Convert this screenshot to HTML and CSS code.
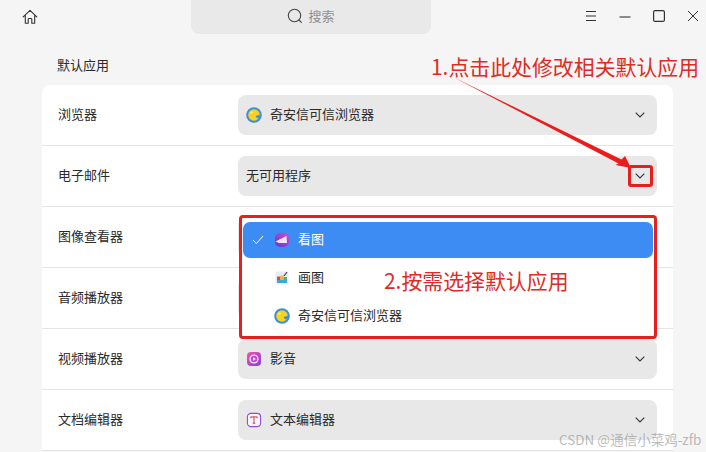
FILE: index.html
```html
<!DOCTYPE html>
<html lang="zh">
<head>
<meta charset="utf-8">
<title>默认应用</title>
<link rel="stylesheet" href="styles.css">
</head>
<body>
<div class="app">
  <header class="titlebar">
    <svg class="home-icon" width="16" height="16" viewBox="0 0 16 16"><path d="M1.2 7.800 8 1.400l6.800 6.400M3.300 6.600v7.600h2.900v-3.900c0-.5.3-.8.8-.8h2c.5 0 .8.300.8.800v3.900h2.900V6.600" fill="none" stroke="#333" stroke-width="1.100" stroke-linejoin="round" stroke-linecap="round"/></svg>
    <div class="search">
      <svg width="16" height="16" viewBox="0 0 16 16"><circle cx="7.500" cy="7.500" r="6.200" fill="none" stroke="#444" stroke-width="1.100"/><path d="m12 12 2.400 2.400" stroke="#444" stroke-width="1.100" stroke-linecap="round"/></svg>
      <span>搜索</span>
    </div>
    <div class="win-controls">
      <svg width="12" height="12" viewBox="0 0 12 12"><path d="M1 1.500h10M1 6h10M1 10.500h10" stroke="#333" stroke-width="1.100"/></svg>
      <svg width="12" height="12" viewBox="0 0 12 12"><path d="M.5 7h11" stroke="#333" stroke-width="1.100"/></svg>
      <svg width="12" height="12" viewBox="0 0 12 12"><rect x=".6" y=".6" width="10.800" height="10.800" rx="1.500" fill="none" stroke="#333" stroke-width="1.200"/></svg>
      <svg width="12" height="12" viewBox="0 0 12 12"><path d="m1 1 10 10M11 1 1 11" stroke="#333" stroke-width="1"/></svg>
    </div>
  </header>

  <main class="content">
    <h1 class="heading">默认应用</h1>
    <section class="card">
      <div class="row">
        <span class="label">浏览器</span>
        <div class="select">
          <svg class="app-icon" width="16" height="16" viewBox="0 0 16 16"><circle cx="8" cy="8" r="7.800" fill="#3b8fdc"/><circle cx="8" cy="8" r="5.800" fill="#f7d21e"/><path d="M9.500 9 13.800 7.800v2.400l-2.400 1.300z" fill="#3b8fdc"/><circle cx="5.600" cy="5.600" r="1.200" fill="#fdeb85"/></svg>
          <span class="value">奇安信可信浏览器</span>
          <svg class="chevron" width="10" height="6" viewBox="0 0 10 6"><path d="m.7.7 4.300 4.300L9.300.7" fill="none" stroke="#333" stroke-width="1.100"/></svg>
        </div>
      </div>
      <div class="row">
        <span class="label">电子邮件</span>
        <div class="select">
          <span class="value">无可用程序</span>
          <svg class="chevron" width="10" height="6" viewBox="0 0 10 6"><path d="m.7.7 4.300 4.300L9.300.7" fill="none" stroke="#333" stroke-width="1.100"/></svg>
        </div>
      </div>
      <div class="row">
        <span class="label">图像查看器</span>
        <div class="select"></div>
      </div>
      <div class="row">
        <span class="label">音频播放器</span>
        <div class="select"></div>
      </div>
      <div class="row">
        <span class="label">视频播放器</span>
        <div class="select">
          <svg class="app-icon" width="16" height="16" viewBox="0 0 16 16"><defs><linearGradient id="film" x1="0" y1="0" x2="1" y2="1"><stop offset="0" stop-color="#f454a4"/><stop offset="1" stop-color="#8a3ce0"/></linearGradient></defs><rect x="1" y="1" width="14" height="14" rx="4" fill="url(#film)"/><circle cx="8" cy="8" r="4.600" fill="#fbe6f6"/><circle cx="8" cy="8" r="3.300" fill="#c048d8"/><path d="M7 6.200v3.600L10 8z" fill="#fbe6f6"/></svg>
          <span class="value">影音</span>
          <svg class="chevron" width="10" height="6" viewBox="0 0 10 6"><path d="m.7.7 4.300 4.300L9.300.7" fill="none" stroke="#333" stroke-width="1.100"/></svg>
        </div>
      </div>
      <div class="row">
        <span class="label">文档编辑器</span>
        <div class="select">
          <svg class="app-icon" width="16" height="16" viewBox="0 0 16 16"><rect x="1.400" y="1.400" width="13.200" height="13.200" rx="3.500" fill="#fbf4fb" stroke="#8e50d0" stroke-width="1.100"/><path d="M4.800 6.200V4.900h6.400v1.300M8 4.900v6.300M6.700 11.200h2.600" fill="none" stroke="#b8323a" stroke-width=".9"/></svg>
          <span class="value">文本编辑器</span>
          <svg class="chevron" width="10" height="6" viewBox="0 0 10 6"><path d="m.7.7 4.300 4.300L9.300.7" fill="none" stroke="#333" stroke-width="1.100"/></svg>
        </div>
      </div>
    </section>
  </main>

  <div class="menu">
    <div class="menu-item selected">
      <svg class="check" width="12" height="10" viewBox="0 0 12 10"><path d="m1 5 3.400 3.600L11 1" fill="none" stroke="#fff" stroke-width="1"/></svg>
      <svg class="app-icon" width="16" height="16" viewBox="0 0 16 16"><defs><linearGradient id="pic" x1="1" y1="0" x2="0" y2="1"><stop offset="0" stop-color="#d84cc8"/><stop offset="1" stop-color="#5a38d8"/></linearGradient></defs><rect x="1" y="1" width="14" height="14" rx="5" fill="url(#pic)"/><path d="M1.500 9.500 12.500 4l.5 7H5z" fill="#f4e4fa"/></svg>
      <span>看图</span>
    </div>
    <div class="menu-item">
      <span class="check-space"></span>
      <svg class="app-icon" width="16" height="16" viewBox="0 0 16 16"><rect x="1.500" y="1.500" width="13" height="13" rx="3" fill="#e4ecf8"/><path d="M3 9.500h10V13H3z" fill="#3aa8d8"/><path d="M3 6.500h3.400v3.500H3z" fill="#e8483a"/><path d="M6.400 5.500h3.200V10H6.400z" fill="#f4b42c"/><path d="M9.600 7H13v3H9.600z" fill="#58b858"/><path d="m10 6 3-4" stroke="#444" stroke-width="1.200"/></svg>
      <span>画图</span>
    </div>
    <div class="menu-item">
      <span class="check-space"></span>
      <svg class="app-icon" width="16" height="16" viewBox="0 0 16 16"><circle cx="8" cy="8" r="7.800" fill="#3b8fdc"/><circle cx="8" cy="8" r="5.800" fill="#f7d21e"/><path d="M9.500 9 13.800 7.800v2.400l-2.400 1.300z" fill="#3b8fdc"/><circle cx="5.600" cy="5.600" r="1.200" fill="#fdeb85"/></svg>
      <span>奇安信可信浏览器</span>
    </div>
  </div>

  <div class="note note-one">1.点击此处修改相关默认应用</div>
  <div class="note note-two">2.按需选择默认应用</div>
  <div class="chevron-frame"></div>
  <svg class="arrow" width="706" height="452" viewBox="0 0 706 452">
    <path d="M453 77 621.500 159.500l3.500-3.500 6 12-15.500-3 3-1.500z" fill="#ec1c1c"/>
  </svg>
  <div class="watermark">CSDN @通信小菜鸡-zfb</div>
</div>
</body>
</html>
```
FILE: styles.css
```css
* { box-sizing: border-box; }
html, body { margin: 0; padding: 0; }
body {
  width: 706px;
  height: 452px;
  overflow: hidden;
  background: #f5f5f5;
  color: #2a2a2a;
  font-family: "Noto Sans CJK SC", "Noto Sans", sans-serif;
  font-size: 13px;
}
.app { position: relative; width: 706px; height: 452px; overflow: hidden; }

.titlebar { display: flex; align-items: flex-start; height: 34px; }
.home-icon { margin: 9px 0 0 22px; flex: none; }
.search {
  display: flex;
  align-items: center;
  justify-content: center;
  gap: 5px;
  width: 240px;
  height: 34px;
  padding-bottom: 3px;
  margin-left: 153px;
  background: #e9e9e9;
  border-radius: 0 0 8px 8px;
  color: #8f8f8f;
}
.search span { padding-bottom: 1px; }
.win-controls { display: flex; gap: 22px; margin: 10px 0 0 154px; }

.content { padding: 0 33px 0 42px; }
.heading { margin: 0; padding: 21px 0 0 15px; height: 51px; font-size: 13px; font-weight: 400; line-height: 19px; }
.card { background: #fff; border-radius: 8px 8px 0 0; }
.row {
  display: flex;
  align-items: center;
  height: 61px;
  padding: 0 16px;
  border-bottom: 1px solid #e4e4e4;
}
.label { width: 180px; flex: none; padding-bottom: 3px; }
.select {
  display: flex;
  align-items: center;
  flex: 1;
  height: 40px;
  padding: 0 12px 0 8px;
  background: #e8e8e8;
  border-radius: 8px;
}
.app-icon { flex: none; }
.select .app-icon { margin-right: 8px; }
.value { flex: 1; padding-bottom: 3px; }

.menu {
  position: absolute;
  left: 239px;
  top: 215px;
  width: 418px;
  height: 124px;
  padding: 4px 1px 0;
  background: #fff;
  border: 3px solid #e8201c;
  border-radius: 4px;
}
.menu-item { display: flex; align-items: center; height: 38px; padding-left: 9px; }
.menu-item span:last-child { padding-bottom: 3px; }
.menu-item .app-icon { margin-right: 8px; }
.menu-item.selected { background: #3c8cf4; border-radius: 7px; color: #fff; height: 36px; margin-bottom: 1px; }
.check { width: 12px; margin-right: 10px; flex: none; }
.check-space { width: 22px; flex: none; }

.note { position: absolute; color: #e02a26; font-size: 20.900px; line-height: 28px; white-space: nowrap; }
.note-one { left: 431px; top: 52px; }
.note-two { left: 384px; top: 266px; }
.chevron-frame {
  position: absolute;
  left: 628px;
  top: 165px;
  width: 25px;
  height: 22px;
  border: 3px solid #e8201c;
  border-radius: 3px;
}
.arrow { position: absolute; left: 0; top: 0; pointer-events: none; }
.watermark {
  position: absolute;
  left: 559px;
  top: 430px;
  color: rgba(130, 130, 130, .55);
  font-size: 13.500px;
  line-height: 18px;
  white-space: nowrap;
}
```
